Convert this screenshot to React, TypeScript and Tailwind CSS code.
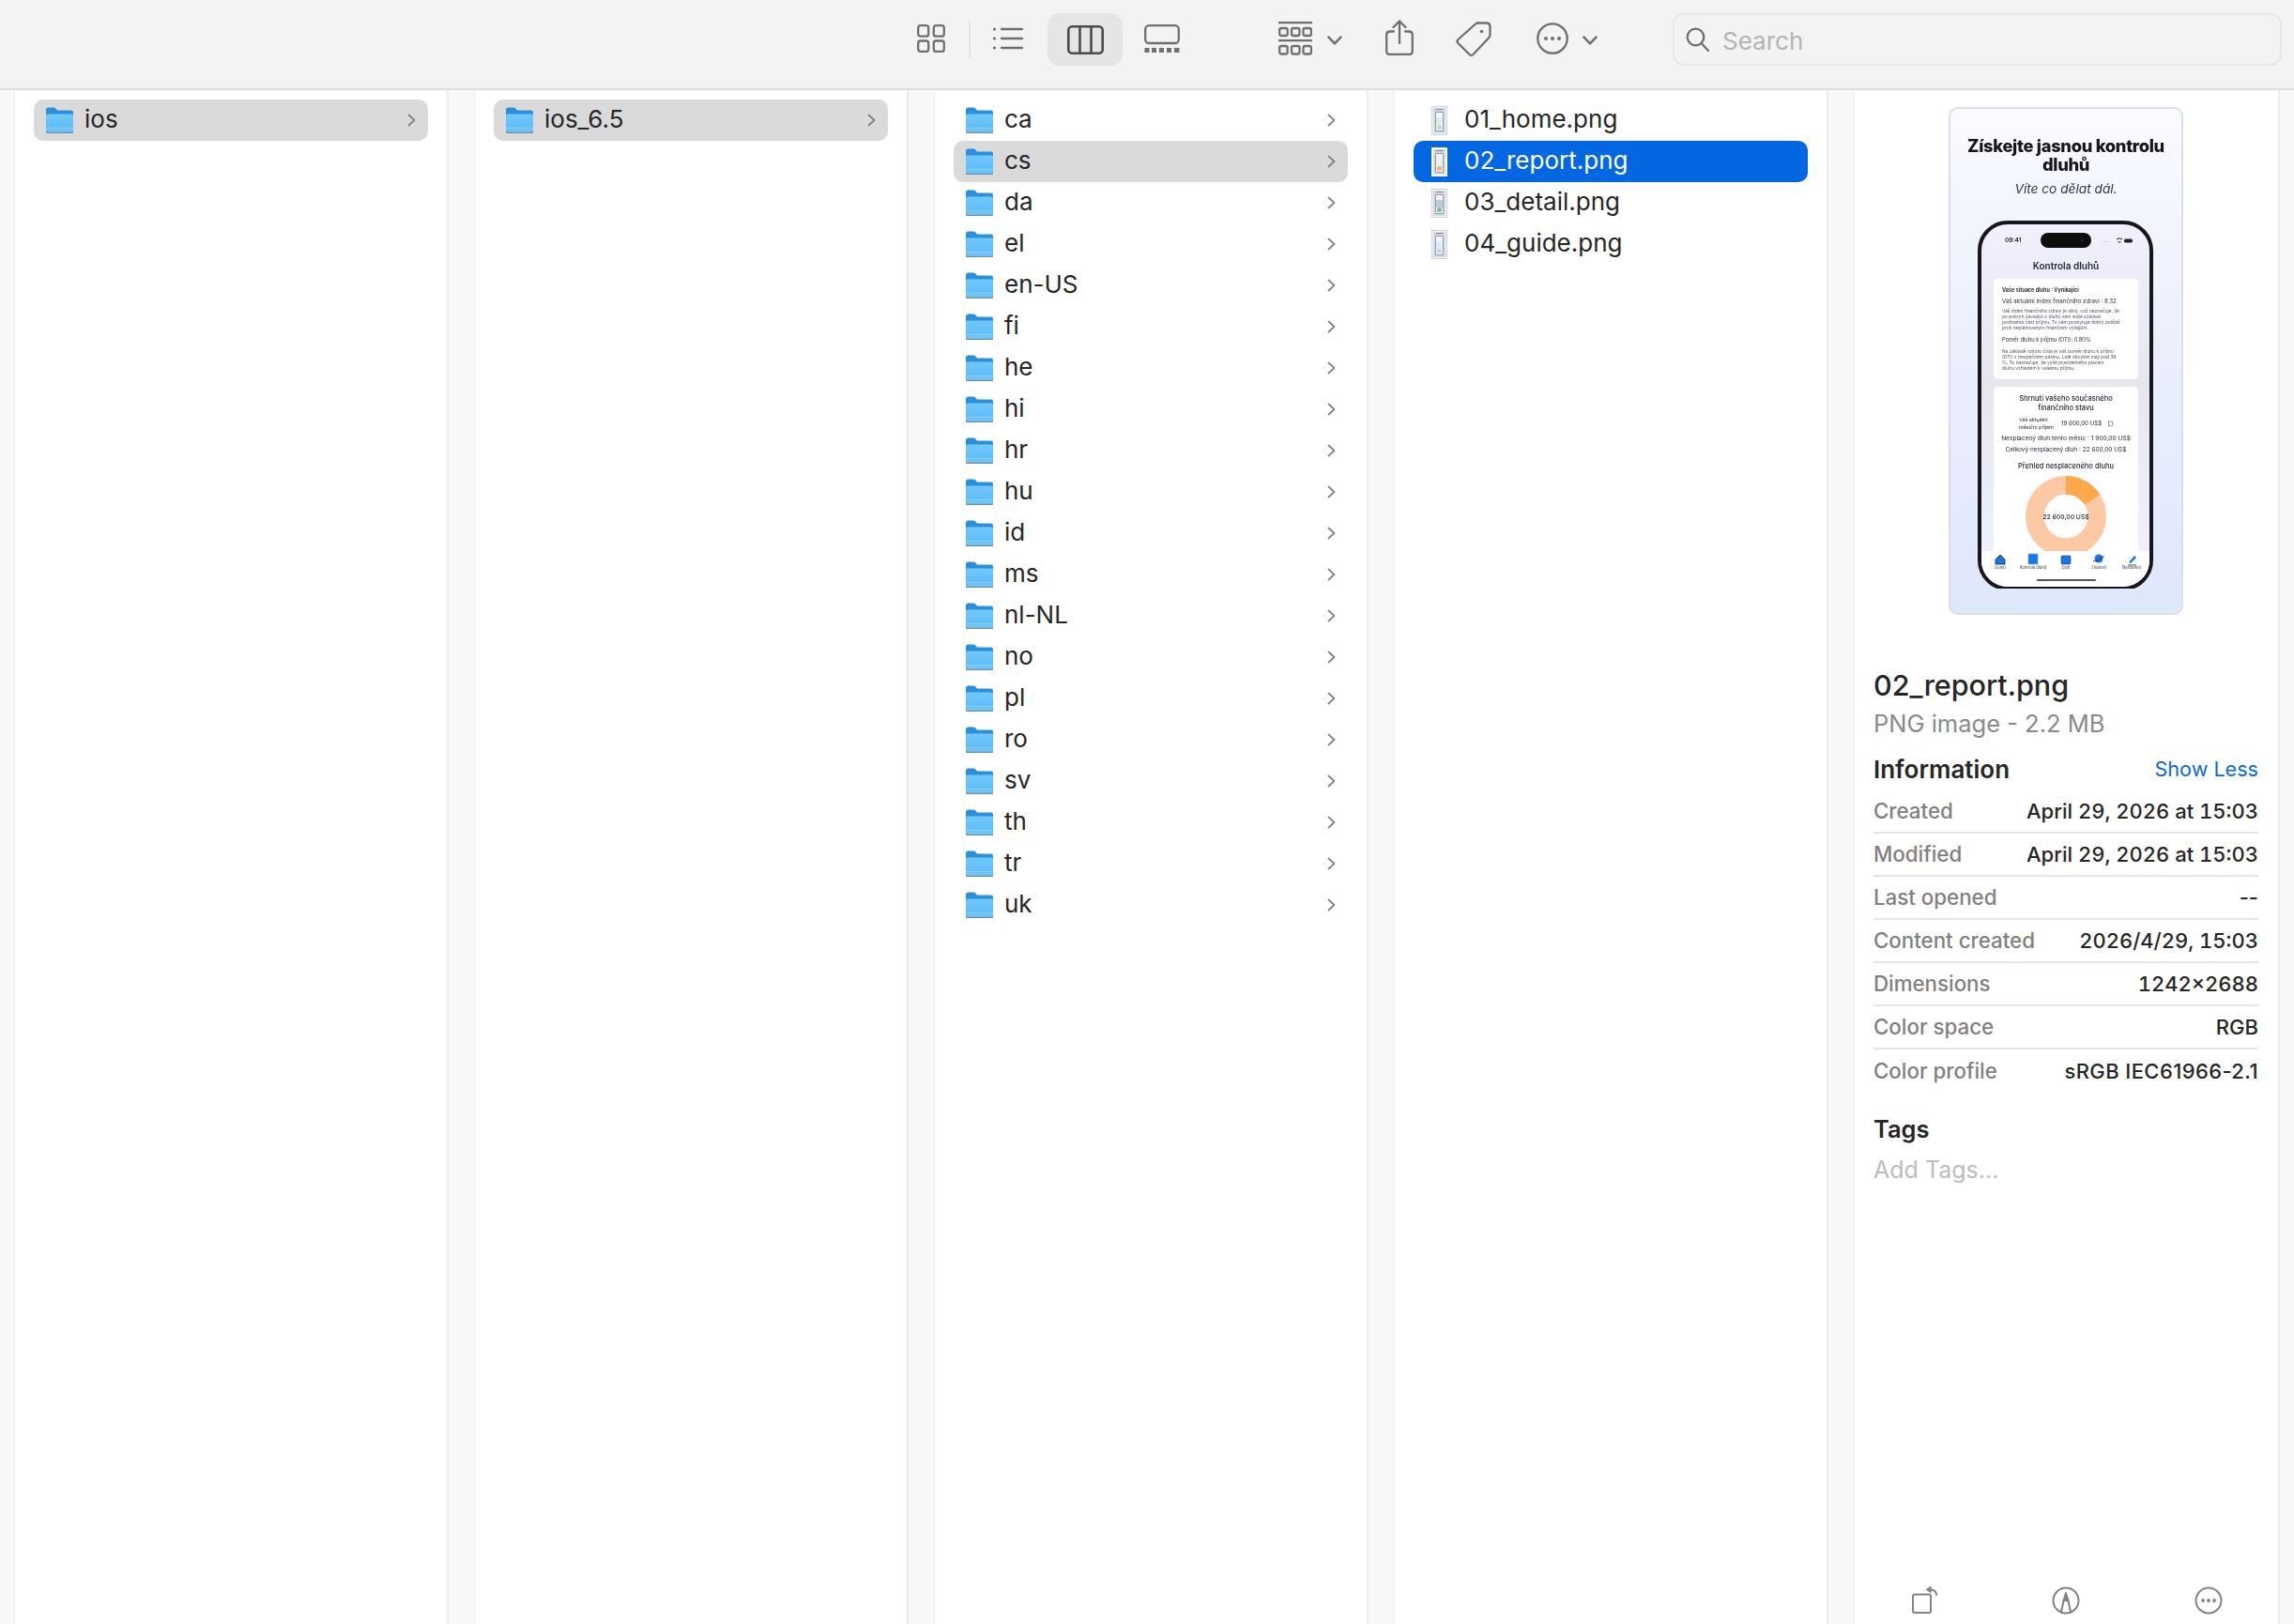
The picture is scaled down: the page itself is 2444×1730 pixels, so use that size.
const FONT = 'font-["Inter","Liberation_Sans",sans-serif]';

const LOCALES = ['ca', 'cs', 'da', 'el', 'en-US', 'fi', 'he', 'hi', 'hr', 'hu', 'id', 'ms', 'nl-NL', 'no', 'pl', 'ro', 'sv', 'th', 'tr', 'uk'];

const FILES = [
  { name: '01_home.png', tint: '#e2eee4', accent: '#bfe3c6' },
  { name: '02_report.png', tint: '#eceef4', accent: '#f8b26a' },
  { name: '03_detail.png', tint: '#c3c8da', accent: '#79c48d' },
  { name: '04_guide.png', tint: '#e3eafb', accent: '#c5d6f7' },
];

const INFO = [
  { label: 'Created', value: 'April 29, 2026 at 15:03', cls: 'tabular-nums' },
  { label: 'Modified', value: 'April 29, 2026 at 15:03', cls: 'tabular-nums' },
  { label: 'Last opened', value: '--', cls: '' },
  { label: 'Content created', value: '2026/4/29, 15:03', cls: 'tabular-nums' },
  { label: 'Dimensions', value: '1242×2688', cls: 'tabular-nums' },
  { label: 'Color space', value: 'RGB', cls: '' },
  { label: 'Color profile', value: 'sRGB IEC61966-2.1', cls: 'tracking-[0.4px]' },
];

const FolderIcon = () => (
  <svg width="29" height="28" viewBox="0 0 29 28" className="flex-none">
    <defs>
      <linearGradient id="folderBody" x1="0" y1="0" x2="0" y2="1">
        <stop offset="0" stopColor="#70c8fc" />
        <stop offset="1" stopColor="#5db9f7" />
      </linearGradient>
    </defs>
    <path d="M0 27V3q0-2.500 2.500-2.500H8q1.500 0 2.500 1.300L12 3.500h14.500Q29 3.500 29 6v21z" fill="#2a90dc" />
    <rect x="0" y="26" width="29" height="2" rx="1" fill="#7b8a96" />
    <path d="M0 9q0-1.500 1.500-1.500h26Q29 7.500 29 9v16q0 2-2 2H2q-2 0-2-2z" fill="url(#folderBody)" />
    <rect x="0" y="22" width="29" height="1" fill="#8ad2fb" />
    <rect x="0" y="24.500" width="29" height="1" fill="#86cffa" />
  </svg>
);

const FileThumb = ({ tint, accent, selected }: { tint: string; accent: string; selected: boolean }) => (
  <div className="flex w-[29px] flex-none justify-center">
    <svg width="17" height="31" viewBox="0 0 17 31">
      <rect x="0.500" y="0.500" width="16" height="30" fill={selected ? '#ffffff' : '#f6f6f6'} stroke={selected ? '#ffffff' : '#d2d2d2'} />
      <rect x="2" y="2" width="13" height="27" fill="#d3d8e6" />
      <rect x="4.500" y="3" width="8" height="1.200" fill="#8f94a2" />
      <rect x="4" y="6" width="9" height="21" rx="1.500" fill="#979ca9" />
      <rect x="5" y="7" width="7" height="19" fill="#f5f6fa" />
      <rect x="5" y="12" width="7" height="8" fill={tint} />
      <rect x="6" y="20" width="5" height="5" rx="2" fill={accent} />
    </svg>
  </div>
);

const Chevron = ({ color }: { color: string }) => (
  <svg width="9" height="14" viewBox="0 0 9 14" className="flex-none">
    <path d="M1.500 1.500 7.500 7l-6 5.500" fill="none" stroke={color} strokeWidth="1.700" strokeLinecap="round" strokeLinejoin="round" />
  </svg>
);

const FolderRow = ({ name, selected = false }: { name: string; selected?: boolean }) => (
  <div className={`mx-[20px] flex h-[44px] items-center gap-[12px] rounded-[10px] pl-[13px] pr-[13px] ${selected ? 'bg-[#dadada]' : ''}`}>
    <FolderIcon />
    <span className="flex-1 pb-[2px] text-[26px] leading-none text-[#262626]">{name}</span>
    <Chevron color="#808080" />
  </div>
);

const Gutter = () => <div className="w-[30px] flex-none border-l-2 border-r border-l-[#ececec] border-r-[#f0f0f0] bg-[#f8f8f8]" />;

const Column = ({ children }: { children?: React.ReactNode }) => (
  <div className="w-[460px] flex-none bg-white pt-[10px]">{children}</div>
);

const ICON = { fill: 'none', stroke: '#6f6f6f', strokeWidth: 2.300, strokeLinecap: 'round', strokeLinejoin: 'round' } as const;

const ToolbarIcons = () => (
  <>
    <svg width="30" height="30" viewBox="0 0 30 30" className="ml-[977px] mt-[26px] flex-none" {...ICON}>
      <rect x="1.200" y="1.200" width="11" height="11.500" rx="2.500" />
      <rect x="17.800" y="1.200" width="11" height="11.500" rx="2.500" />
      <rect x="1.200" y="17.500" width="11" height="11.500" rx="2.500" />
      <rect x="17.800" y="17.500" width="11" height="11.500" rx="2.500" />
    </svg>
    <div className="ml-[25px] mt-[22px] h-[40px] w-[2px] flex-none bg-[#e3e3e3]" />
    <svg width="34" height="28" viewBox="0 0 34 28" className="ml-[23px] mt-[27px] flex-none" {...ICON}>
      <path d="M10 4h22M10 14h22M10 24h22" />
      <circle cx="2.500" cy="4" r="1.600" fill="#6f6f6f" stroke="none" />
      <circle cx="2.500" cy="14" r="1.600" fill="#6f6f6f" stroke="none" />
      <circle cx="2.500" cy="24" r="1.600" fill="#6f6f6f" stroke="none" />
    </svg>
    <div className="ml-[25px] mt-[14px] flex h-[56px] w-[80px] flex-none items-center justify-center rounded-[13px] bg-[#e5e5e5]">
      <svg width="39" height="31" viewBox="0 0 39 31" fill="none" stroke="#4b4b4b" strokeWidth="2.600" strokeLinejoin="round">
        <rect x="1.300" y="1.300" width="36.400" height="28.400" rx="4" />
        <path d="M13.500 1.300v28.400M25.500 1.300v28.400" />
      </svg>
    </div>
    <svg width="38" height="30" viewBox="0 0 38 30" className="ml-[23px] mt-[26px] flex-none" {...ICON}>
      <rect x="1.200" y="1.200" width="35.600" height="18.800" rx="4" />
      <g fill="#6f6f6f" stroke="none">
        <rect x="0.500" y="25" width="5" height="5" />
        <rect x="8" y="25" width="5" height="5" />
        <rect x="16" y="25" width="5" height="5" />
        <rect x="24" y="25" width="5" height="5" />
        <rect x="32" y="25" width="5.500" height="5" />
      </g>
    </svg>
    <svg width="36" height="36" viewBox="0 0 36 36" className="ml-[105px] mt-[23px] flex-none" {...ICON}>
      <path d="M0 1.200h36M0 20.200h36" />
      <rect x="1.200" y="7" width="8.500" height="8" rx="2" />
      <rect x="14" y="7" width="8.500" height="8" rx="2" />
      <rect x="26.500" y="7" width="8.500" height="8" rx="2" />
      <rect x="1.200" y="26" width="8.500" height="8.500" rx="2" />
      <rect x="14" y="26" width="8.500" height="8.500" rx="2" />
      <rect x="26.500" y="26" width="8.500" height="8.500" rx="2" />
    </svg>
    <svg width="16" height="10" viewBox="0 0 16 10" className="ml-[16px] mt-[38px] flex-none" fill="none" stroke="#6f6f6f" strokeWidth="2.600" strokeLinecap="round" strokeLinejoin="round">
      <path d="M1.500 1.700 8 8.300l6.500-6.600" />
    </svg>
    <svg width="30" height="38" viewBox="0 0 30 38" className="ml-[46px] mt-[21px] flex-none" {...ICON}>
      <path d="M9 12.500H5q-3.800 0-3.800 3.800v16.900q0 3.800 3.800 3.800h20q3.800 0 3.800-3.800V16.300q0-3.800-3.800-3.800h-4" />
      <path d="M15 25V1.500M8.500 8 15 1.500 21.500 8" />
    </svg>
    <svg width="38" height="38" viewBox="0 0 38 38" className="ml-[45px] mt-[23px] flex-none" {...ICON}>
      <path d="M24 1.500h8.500q4 0 4 4V14q0 2-1.500 3.500L18.500 35q-2 2-4 0L2.500 23q-2-2 0-4L21 2.500q1-1 3-1z" />
      <circle cx="27.500" cy="10.500" r="1.800" fill="#6f6f6f" stroke="none" />
    </svg>
    <svg width="34" height="34" viewBox="0 0 34 34" className="ml-[48px] mt-[24px] flex-none" {...ICON}>
      <circle cx="17" cy="17" r="15.700" />
      <g fill="#6f6f6f" stroke="none">
        <circle cx="10" cy="17" r="2" />
        <circle cx="17" cy="17" r="2" />
        <circle cx="24" cy="17" r="2" />
      </g>
    </svg>
    <svg width="16" height="10" viewBox="0 0 16 10" className="ml-[15px] mt-[38px] flex-none" fill="none" stroke="#6f6f6f" strokeWidth="2.600" strokeLinecap="round" strokeLinejoin="round">
      <path d="M1.500 1.700 8 8.300l6.500-6.600" />
    </svg>
  </>
);

const SearchBox = () => (
  <div className="ml-[80px] mt-[14px] flex h-[56px] w-[649px] flex-none items-center rounded-[12px] border-2 border-[#e7e7e7] pl-[12px]">
    <svg width="26" height="27" viewBox="0 0 26 27" fill="none" stroke="#6f6f6f" strokeWidth="2.300" strokeLinecap="round">
      <circle cx="10.500" cy="10.500" r="8.800" />
      <path d="M17 17.500l7 7.500" />
    </svg>
    <span className="ml-[13px] pt-[3px] text-[26px] leading-none text-[#b4b4b4]">Search</span>
  </div>
);

// the preview is a picture of a store screenshot, so it is drawn whole
const Preview = () => (
  <svg width="250" height="541" viewBox="0 0 250 541" className="flex-none" style={{ fontFamily: 'Inter, sans-serif' }}>
    <defs>
      <linearGradient id="pvBg" x1="0" y1="0" x2="0" y2="1">
        <stop offset="0" stopColor="#fafbff" />
        <stop offset="0.450" stopColor="#ecf0fd" />
        <stop offset="1" stopColor="#dfe7fb" />
      </linearGradient>
      <linearGradient id="pvScreen" x1="0" y1="0" x2="0" y2="1">
        <stop offset="0" stopColor="#f1f1fe" />
        <stop offset="0.450" stopColor="#e6e6ee" />
        <stop offset="1" stopColor="#f0f4ff" />
      </linearGradient>
      <clipPath id="pvClip">
        <rect x="35" y="125" width="179" height="386" rx="28" />
      </clipPath>
      <filter id="pvSoft" x="0" y="0" width="100%" height="100%">
        <feGaussianBlur stdDeviation="0.300" />
      </filter>
    </defs>
    <rect x="1" y="1" width="248" height="539" rx="9" fill="url(#pvBg)" stroke="#d9deea" strokeWidth="2" />
    <g filter="url(#pvSoft)">
      <text x="125" y="48" textAnchor="middle" fontSize="18.300" fontWeight="800" fill="#14151a" letterSpacing="-0.300">Získejte jasnou kontrolu</text>
      <text x="125" y="68" textAnchor="middle" fontSize="18.300" fontWeight="800" fill="#14151a" letterSpacing="-0.300">dluhů</text>
      <text x="125" y="92" textAnchor="middle" fontSize="13.700" fontStyle="italic" fill="#33353d">Víte co dělat dál.</text>

      <rect x="33" y="123" width="183" height="390" rx="30" fill="url(#pvScreen)" stroke="#17181a" strokeWidth="4" />
      <g clipPath="url(#pvClip)">
        <text x="60" y="144" fontSize="6.500" fontWeight="600" fill="#222">09:41</text>
        <rect x="98" y="134" width="54" height="16" rx="8" fill="#0b0b0f" />
        <circle cx="142" cy="142" r="2" fill="#1c1c3a" />
        <path d="M179 141q3-2.500 6 0M180.500 143l1.500 1.500 1.500-1.500" fill="none" stroke="#222" strokeWidth="1" />
        <rect x="187" y="140.500" width="9" height="4" rx="1.500" fill="#222" />
        <text x="164" y="144" fontSize="5" fill="#999">....</text>
        <text x="125" y="173" textAnchor="middle" fontSize="10" fontWeight="600" fill="#1f2230">Kontrola dluhů</text>

        <rect x="48" y="183" width="154" height="107" rx="5" fill="#ffffff" />
        <text x="57" y="197" fontSize="5.500" fontWeight="700" fill="#30323e">Vaše situace dluhu : Vynikající</text>
        <text x="57" y="209" fontSize="6.150" fill="#30323e">Váš aktuální index finančního zdraví : 8.32</text>
        <g fontSize="4.900" fill="#545664">
          <text x="57" y="219">Váš index finančního zdraví je silný, což naznačuje, že</text>
          <text x="57" y="225">po pokrytí závazků z dluhů vám stále zůstává</text>
          <text x="57" y="231">podstatná část příjmu. To vám poskytuje dobrý polštář</text>
          <text x="57" y="237">proti neplánovaným finančním výdajům.</text>
        </g>
        <text x="57" y="250" fontSize="5.800" fill="#30323e">Poměr dluhu k příjmu (DTI): 0.80%</text>
        <g fontSize="4.900" fill="#545664">
          <text x="57" y="262">Na základě tohoto čísla je váš poměr dluhu k příjmu</text>
          <text x="57" y="268">(DTI) v bezpečném pásmu. Lidé obvykle mají pod 36</text>
          <text x="57" y="274">%. To naznačuje, že výše pravidelného placení</text>
          <text x="57" y="280">dluhu vzhledem k vašemu příjmu.</text>
        </g>

        <rect x="48" y="298" width="154" height="190" rx="5" fill="#ffffff" />
        <g textAnchor="middle" fill="#262836">
          <text x="125" y="313" fontSize="7.500" fontWeight="500">Shrnutí vašeho současného</text>
          <text x="125" y="323" fontSize="7.500" fontWeight="500">finančního stavu</text>
          <text x="125" y="355" fontSize="6.600">Nesplacený dluh tento měsíc : 1 900,00 US$</text>
          <text x="125" y="367" fontSize="6.500">Celkový nesplacený dluh : 22 600,00 US$</text>
          <text x="125" y="385" fontSize="7.500" fontWeight="500">Přehled nesplaceného dluhu</text>
        </g>
        <g fontSize="5.400" fill="#262836">
          <text x="75" y="335">Váš aktuální</text>
          <text x="75" y="343">měsíční příjem</text>
          <text x="120" y="339" fontSize="6.200">19 600,00 US$</text>
        </g>
        <rect x="170.500" y="335" width="4" height="4.500" fill="none" stroke="#555" strokeWidth="0.600" />

        <circle cx="125" cy="436" r="33.200" fill="none" stroke="#fdc9a4" strokeWidth="19.600" />
        <path d="M125 393A43 43 0 0 1 161.300 413L144.800 423.400A23.500 23.500 0 0 0 125 412.500z" fill="#fca84c" />
        <text x="125" y="439" textAnchor="middle" fontSize="6.800" fontWeight="500" fill="#262836">22 600,00 US$</text>

        <rect x="35" y="473" width="179" height="40" fill="#ffffff" />
        <g>
          <path d="M50 482l5-5 5 5v5H50z" fill="#1277e6" stroke="#14243f" strokeWidth="0.800" />
          <rect x="85" y="476" width="10" height="11" fill="#1277e6" stroke="#8aa1c0" strokeWidth="0.800" />
          <rect x="120" y="478" width="10" height="9" rx="1" fill="#1277e6" stroke="#14243f" strokeWidth="0.500" />
          <circle cx="160" cy="481" r="4.500" fill="#1277e6" />
          <path d="M154 484q6 0 12-6" fill="none" stroke="#14243f" strokeWidth="0.800" />
          <path d="M192 485l6-7 2 2-6 6z" fill="#1277e6" />
          <path d="M191 488h9" stroke="#14243f" strokeWidth="0.800" />
        </g>
        <g textAnchor="middle" fontSize="4.200" fill="#3a3c48">
          <text x="55" y="492">Domů</text>
          <text x="90" y="492">Kontrola dluhů</text>
          <text x="125" y="492">Dluh</text>
          <text x="160" y="492">Znalosti</text>
          <text x="195" y="492">Nastavení</text>
        </g>
        <rect x="94" y="503" width="63" height="2" rx="1" fill="#55565c" />
      </g>
    </g>
  </svg>
);

const PreviewActions = () => (
  <div className="mt-auto flex items-center justify-between pb-[9px] pl-[55px] pr-[58px]">
    <svg width="34" height="32" viewBox="0 0 34 32" fill="none" stroke="#838383" strokeWidth="2" strokeLinecap="round" strokeLinejoin="round">
      <rect x="7" y="9.500" width="19" height="19.500" rx="2" />
      <path d="M32 10q0-5-6-5.500" />
      <path d="M26 1.500v6L21.500 4.500z" fill="#838383" strokeWidth="1" />
    </svg>
    <svg width="32" height="32" viewBox="0 0 32 32" fill="none" stroke="#838383" strokeWidth="2" strokeLinecap="round" strokeLinejoin="round">
      <circle cx="16" cy="16" r="13.500" />
      <path d="M11 28.500 13.500 16h5L21 28.500" />
      <path d="M13.500 16 16 8l2.500 8z" fill="#838383" />
    </svg>
    <svg width="32" height="32" viewBox="0 0 32 32" fill="none" stroke="#838383" strokeWidth="2">
      <circle cx="16" cy="16" r="13.500" />
      <g fill="#838383" stroke="none">
        <circle cx="10" cy="16" r="1.900" />
        <circle cx="16" cy="16" r="1.900" />
        <circle cx="22" cy="16" r="1.900" />
      </g>
    </svg>
  </div>
);

const InfoPanel = () => (
  <div className="flex w-[451px] flex-none flex-col bg-white">
    <div className="mt-[18px] flex justify-center pr-[2px]">
      <Preview />
    </div>
    <div className="flex flex-1 flex-col pl-[20px] pr-[21px]">
      <div className="mt-[56px] flex h-[38px] items-center text-[30.500px] font-medium text-[#262626]">02_report.png</div>
      <div className="mt-[5px] flex h-[34px] items-center text-[25.500px] text-[#8a8a8a]">PNG image - 2.2 MB</div>
      <div className="mt-[13px] flex h-[36px] items-center justify-between">
        <span className="text-[26px] font-semibold text-[#262626]">Information</span>
        <span className="text-[21.600px] text-[#0a68dc]">Show Less</span>
      </div>
      <div className="mt-[5px]">
        {INFO.map(({ label, value, cls }, i) => (
          <div key={label} className={`flex h-[46px] items-center justify-between ${i < INFO.length - 1 ? 'border-b-2 border-[#e5e5e5]' : ''}`}>
            <span className="text-[22.300px] font-medium text-[#808080]">{label}</span>
            <span className={`text-[22px] font-medium text-[#262626] ${cls}`}>{value}</span>
          </div>
        ))}
      </div>
      <div className="mt-[21px] flex h-[36px] items-center text-[25.500px] font-semibold text-[#262626]">Tags</div>
      <div className="mt-[8px] flex h-[36px] items-center text-[25px] text-[#bdbdbd]">Add Tags...</div>
    </div>
    <PreviewActions />
  </div>
);

export default function App() {
  return (
    <div className={`flex h-[1730px] w-[2444px] flex-col overflow-hidden bg-white ${FONT}`}>
      <div className="flex h-[96px] flex-none border-b-2 border-[#dedede] bg-[#f3f3f3]">
        <ToolbarIcons />
        <SearchBox />
      </div>
      <div className="flex min-h-0 flex-1">
        <div className="w-[16px] flex-none border-r border-[#ececec] bg-[#f8f8f8]" />
        <Column>
          <FolderRow name="ios" selected />
        </Column>
        <Gutter />
        <Column>
          <FolderRow name="ios_6.5" selected />
        </Column>
        <Gutter />
        <Column>
          {LOCALES.map((loc) => (
            <FolderRow key={loc} name={loc} selected={loc === 'cs'} />
          ))}
        </Column>
        <Gutter />
        <Column>
          {FILES.map((f) => {
            const selected = f.name === '02_report.png';
            return (
              <div key={f.name} className={`mx-[20px] flex h-[44px] items-center gap-[12px] rounded-[10px] pl-[13px] ${selected ? 'bg-[#0367e1]' : ''}`}>
                <FileThumb tint={f.tint} accent={f.accent} selected={selected} />
                <span className={`pb-[2px] text-[26px] leading-none ${selected ? 'text-white' : 'text-[#262626]'}`}>{f.name}</span>
              </div>
            );
          })}
        </Column>
        <Gutter />
        <InfoPanel />
        <div className="flex-1 border-l-2 border-[#ececec] bg-[#f8f8f8]" />
      </div>
    </div>
  );
}
